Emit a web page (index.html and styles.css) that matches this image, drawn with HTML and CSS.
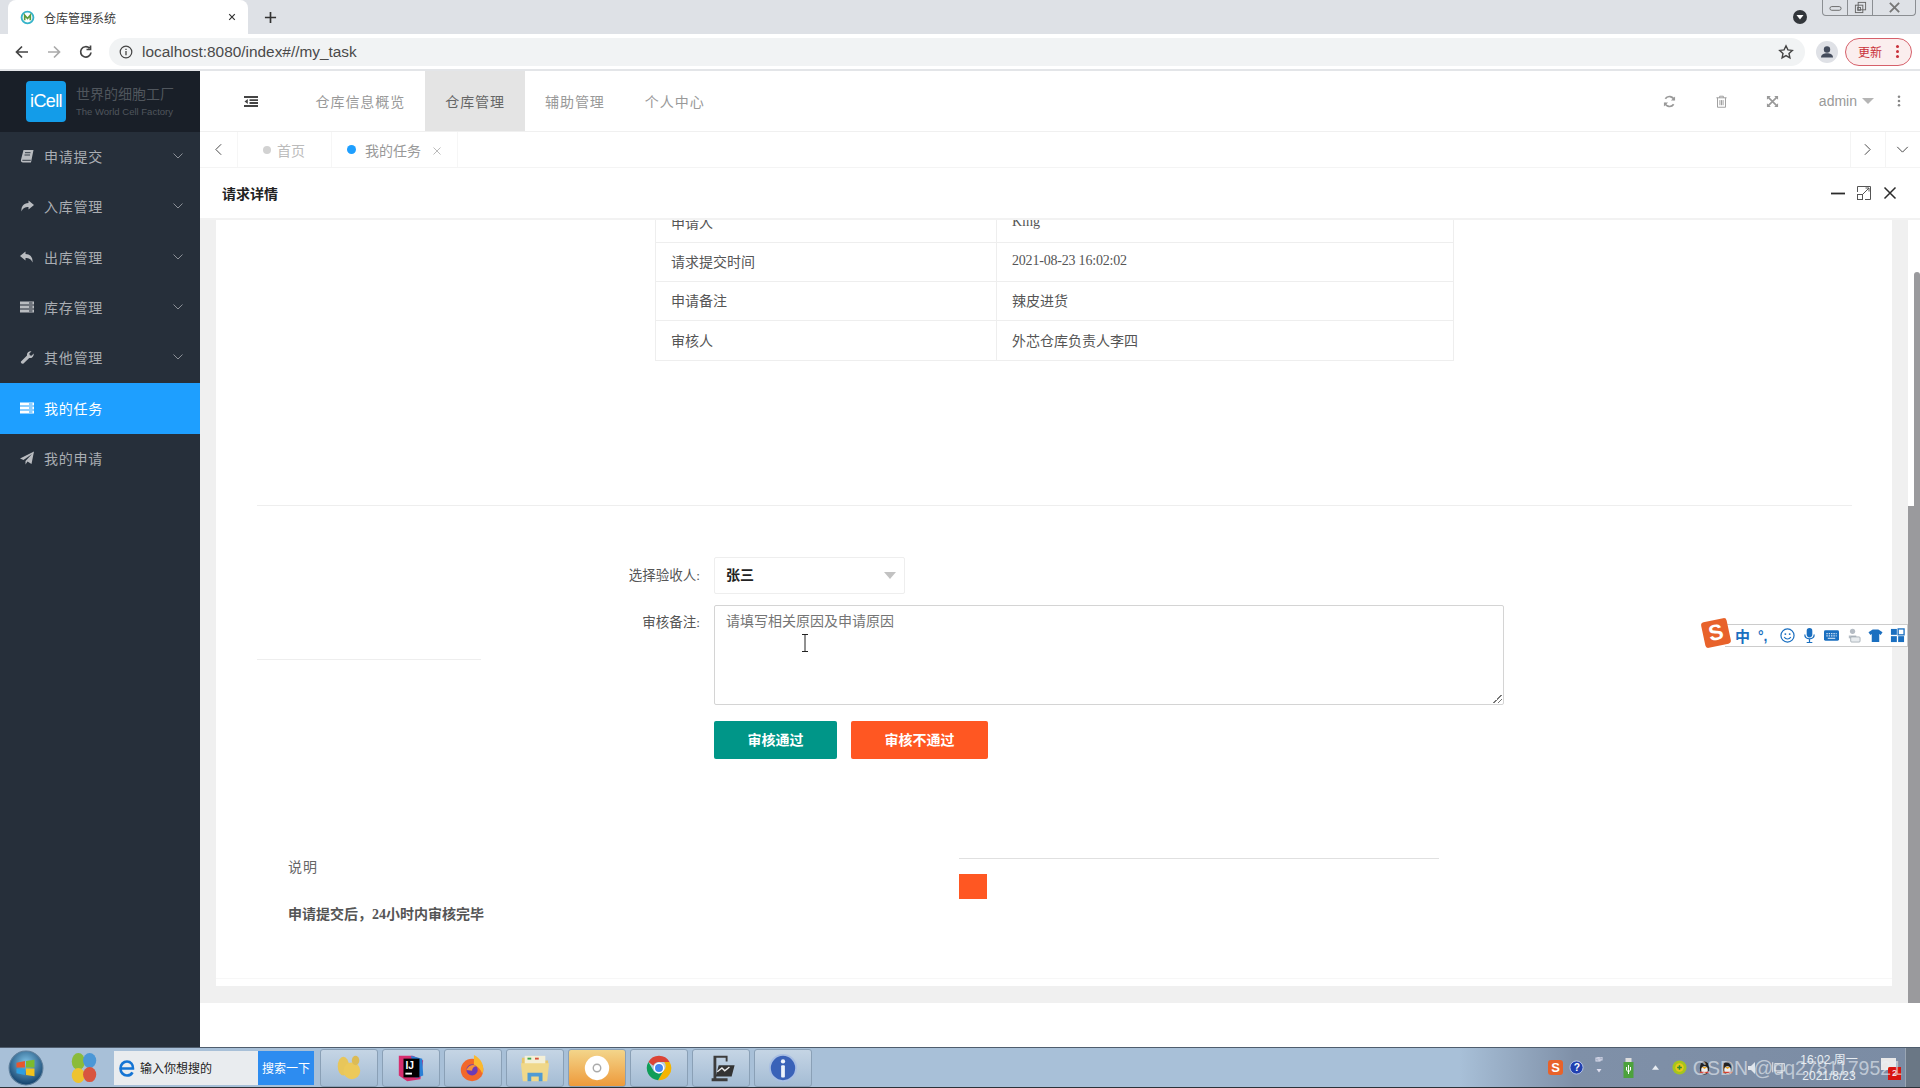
FILE: index.html
```html
<!DOCTYPE html>
<html lang="zh-CN">
<head>
<meta charset="utf-8">
<title>仓库管理系统</title>
<link rel="stylesheet" href="styles.css">
</head>
<body>
<div class="screen">
  <header class="browser">
    <div class="tabstrip">
      <div class="btab">
        <svg class="favicon" viewBox="0 0 16 16"><circle cx="8" cy="8" r="6.3" fill="none" stroke="#35b3c9" stroke-width="2"/><path d="M5 11V5.5L8 9l3-3.500V11" fill="none" stroke="#5b9a3c" stroke-width="1.800"/></svg>
        <span class="btab-title">仓库管理系统</span>
        <svg class="btab-x" viewBox="0 0 10 10"><path d="M1.500 1.500l7 7M8.500 1.500l-7 7" stroke="#333" stroke-width="1.500"/></svg>
      </div>
      <svg class="newtab" viewBox="0 0 14 14"><path d="M7 1v12M1 7h12" stroke="#333" stroke-width="1.800"/></svg>
      <div class="strip-right">
        <span class="profile-dot"><svg viewBox="0 0 14 14"><circle cx="7" cy="7" r="7" fill="#32363b"/><path d="M3.500 5h7L7 9.500z" fill="#fff"/></svg></span>
        <div class="winbtns">
          <span class="winbtn"><svg viewBox="0 0 14 10"><rect x="1" y="4" width="12" height="4" rx="2" fill="none" stroke="#666"/></svg></span>
          <span class="winbtn"><svg viewBox="0 0 14 14"><rect x="1.500" y="4.500" width="8" height="8" fill="none" stroke="#666"/><rect x="4.500" y="1.500" width="8" height="8" fill="none" stroke="#666"/><rect x="4" y="7" width="3" height="3" fill="none" stroke="#666"/></svg></span>
          <span class="winbtn wide"><svg viewBox="0 0 14 10"><path d="M2 0l10 10M12 0L2 10" stroke="#777" stroke-width="2"/></svg></span>
        </div>
      </div>
    </div>
    <div class="toolbar">
      <svg class="nav-ic" viewBox="0 0 16 16"><path d="M14 8H3M8 2.500L2.500 8 8 13.500" fill="none" stroke="#444" stroke-width="1.700"/></svg>
      <svg class="nav-ic" viewBox="0 0 16 16"><path d="M2 8h11M8 2.500L13.500 8 8 13.500" fill="none" stroke="#aaa" stroke-width="1.700"/></svg>
      <svg class="nav-ic" viewBox="0 0 16 16"><path d="M13 8.500A5.200 5.200 0 1 1 11.500 4.200M12.500 1.500V5.500H8.500" fill="none" stroke="#444" stroke-width="1.700"/></svg>
      <div class="address">
        <svg class="info-ic" viewBox="0 0 14 14"><circle cx="7" cy="7" r="5.800" fill="none" stroke="#444" stroke-width="1.200"/><path d="M7 6v4.200M7 3.700v1.300" stroke="#444" stroke-width="1.300"/></svg>
        <span class="url">localhost:8080/index#//my_task</span>
        <svg class="star-ic" viewBox="0 0 16 16"><path d="M8 1.800l1.900 4.100 4.400.5-3.300 3 .9 4.400L8 11.600l-3.900 2.200.9-4.400-3.300-3 4.400-.5z" fill="none" stroke="#444" stroke-width="1.400"/></svg>
      </div>
      <span class="avatar"><svg viewBox="0 0 22 22"><circle cx="11" cy="11" r="11" fill="#dfe1e6"/><circle cx="11" cy="8.500" r="3.200" fill="#444c5c"/><path d="M5 16.500c0-3 3-4.200 6-4.200s6 1.200 6 4.200z" fill="#444c5c"/></svg></span>
      <span class="update">更新<i class="update-dots"></i></span>
    </div>
  </header>

  <div class="app">
    <aside class="sidebar">
      <div class="logo">
        <span class="logo-mark">iCell</span>
        <div class="logo-text">
          <span class="logo-cn">世界的细胞工厂</span>
          <span class="logo-en">The World Cell Factory</span>
        </div>
      </div>
      <nav class="menu">
        <a class="menu-item">
          <svg class="menu-ic" viewBox="0 0 14 14"><path d="M3.500 1h10l-2.300 11.500-.3 1H3c-1.500 0-2.500-1.200-2-2.700z" fill="#b9bcc0"/><path d="M5 3.700h5.500M4.500 6h5.500M2.300 11.300h8.500" stroke="#262f3a" stroke-width=".9"/></svg>
          <span class="menu-label">申请提交</span>
          <svg class="chev" viewBox="0 0 10 6"><path d="M.5.500L5 5 9.500.500" fill="none" stroke="currentColor"/></svg>
        </a>
        <a class="menu-item">
          <svg class="menu-ic" viewBox="0 0 14 14"><path d="M8.500 1.500L14 6 8.500 10.500V8C5 8 3 9 1.500 12.500 1 7.500 3.500 4.200 8.500 4z" fill="#b9bcc0"/></svg>
          <span class="menu-label">入库管理</span>
          <svg class="chev" viewBox="0 0 10 6"><path d="M.5.500L5 5 9.500.500" fill="none" stroke="currentColor"/></svg>
        </a>
        <a class="menu-item">
          <svg class="menu-ic" viewBox="0 0 14 14"><path d="M5.500 1.500L0 6l5.500 4.500V8c3.500 0 5.500 1 7 4.500.5-5-2-8.300-7-8.500z" fill="#b9bcc0"/></svg>
          <span class="menu-label">出库管理</span>
          <svg class="chev" viewBox="0 0 10 6"><path d="M.5.500L5 5 9.500.500" fill="none" stroke="currentColor"/></svg>
        </a>
        <a class="menu-item">
          <svg class="menu-ic" viewBox="0 0 14 14"><path d="M0 1.500h14v3H0zM0 5.500h14v3H0zM0 9.500h14v3H0z" fill="#b9bcc0"/><path d="M9 3h3.500M9 7h3.500M9 11h3.500" stroke="#262f3a"/></svg>
          <span class="menu-label">库存管理</span>
          <svg class="chev" viewBox="0 0 10 6"><path d="M.5.500L5 5 9.500.500" fill="none" stroke="currentColor"/></svg>
        </a>
        <a class="menu-item">
          <svg class="menu-ic" viewBox="0 0 14 14"><path d="M1 11.500L7 5.500C6.500 3 8.500.800 11.500 1.200L9.300 3.500l.5 1.700 1.700.5 2.200-2.200c.4 3-2 5-4.500 4.500L3.500 13.500c-1.200 1-3.400-.8-2.500-2z" fill="#b9bcc0"/></svg>
          <span class="menu-label">其他管理</span>
          <svg class="chev" viewBox="0 0 10 6"><path d="M.5.500L5 5 9.500.500" fill="none" stroke="currentColor"/></svg>
        </a>
        <a class="menu-item active">
          <svg class="menu-ic" viewBox="0 0 14 14"><path d="M0 1.500h14v3H0zM0 5.500h14v3H0zM0 9.500h14v3H0z" fill="#fff"/><path d="M9 3h3.500M9 7h3.500M9 11h3.500" stroke="#1e9fff"/></svg>
          <span class="menu-label">我的任务</span>
        </a>
        <a class="menu-item">
          <svg class="menu-ic" viewBox="0 0 14 14"><path d="M14 .500L11.500 13 7.500 10.500 5.500 13.500V10L12 3 3.500 9 0 7.500z" fill="#b9bcc0"/></svg>
          <span class="menu-label">我的申请</span>
        </a>
      </nav>
    </aside>

    <main class="content">
      <div class="topnav">
        <svg class="fold-ic" viewBox="0 0 14 11"><path d="M0 1h14M5.500 4.200H14M5.500 7H14M0 10h14" stroke="#444" stroke-width="1.800"/><path d="M3.800 3L.5 5.500l3.300 2.500z" fill="#444"/></svg>
        <a class="topnav-item">仓库信息概览</a>
        <a class="topnav-item current">仓库管理</a>
        <a class="topnav-item">辅助管理</a>
        <a class="topnav-item">个人中心</a>
        <div class="topnav-right">
          <svg class="tool-ic" viewBox="0 0 14 14"><path d="M12 5.500A5.300 5.300 0 0 0 2.500 4M2 8.500A5.300 5.300 0 0 0 11.500 10" fill="none" stroke="#999" stroke-width="1.800"/><path d="M13 1.500V6H8.500zM1 12.500V8h4.500z" fill="#999"/></svg>
          <svg class="tool-ic" viewBox="0 0 14 14"><path d="M1.500 3h11M5 3V1.300h4V3M2.700 3v10.200h8.600V3M5.300 5.500v5.500M7 5.500v5.500M8.700 5.500v5.500" fill="none" stroke="#999"/></svg>
          <svg class="tool-ic last" viewBox="0 0 14 14"><path d="M1 1h4.200L1 5.200zM13 1H8.800L13 5.200zM1 13h4.200L1 8.800zM13 13H8.800L13 8.800z" fill="#999"/><path d="M2.500 2.500l9 9M11.500 2.500l-9 9" stroke="#999" stroke-width="1.800"/></svg>
          <span class="admin">admin<i class="caret"></i></span>
          <svg class="more-ic" viewBox="0 0 4 14"><circle cx="2" cy="2" r="1.500" fill="#888"/><circle cx="2" cy="7" r="1.500" fill="#888"/><circle cx="2" cy="12" r="1.500" fill="#888"/></svg>
        </div>
      </div>

      <div class="tabs">
        <span class="tab-arrow first"><svg viewBox="0 0 8 14"><path d="M7 1L1 7l6 6" fill="none" stroke="#444" stroke-width="1.100"/></svg></span>
        <span class="page-tab home"><i class="dot grey"></i>首页</span>
        <span class="page-tab task"><i class="dot blue"></i>我的任务<svg class="tab-close" viewBox="0 0 8 8"><path d="M.5.500l7 7M7.500.500l-7 7" stroke="#bbb"/></svg></span>
        <span class="tabs-fill"></span>
        <span class="tab-arrow bordered"><svg viewBox="0 0 8 14"><path d="M1 1l6 6-6 6" fill="none" stroke="#444" stroke-width="1.100"/></svg></span>
        <span class="tab-arrow bordered"><svg class="tab-down" viewBox="0 0 14 8"><path d="M1 1l6 6 6-6" fill="none" stroke="#444" stroke-width="1.100"/></svg></span>
      </div>

      <div class="dialog-title">
        <span class="dialog-name">请求详情</span>
        <div class="dialog-tools">
          <svg class="dlg-ic" viewBox="0 0 14 14"><path d="M0 7.500h14" stroke="#2b2b2b" stroke-width="1.800"/></svg>
          <svg class="dlg-ic" viewBox="0 0 14 14"><path d="M.5 6V.5h13v13H8" fill="none" stroke="#555"/><rect x=".5" y="8.500" width="5" height="5" fill="none" stroke="#555"/><path d="M6 8L12 2M8.500 2H12v3.500" fill="none" stroke="#555"/></svg>
          <svg class="dlg-ic" viewBox="0 0 14 14"><path d="M1.500 1.500l11 11M12.500 1.500l-11 11" stroke="#2b2b2b" stroke-width="1.500"/></svg>
        </div>
      </div>

      <div class="dialog-body">
        <div class="pane">
          <div class="card">
            <table class="info">
              <tr><td class="info-key">申请人</td><td>King</td></tr>
              <tr><td class="info-key">请求提交时间</td><td><span class="info-date">2021-08-23 16:02:02</span></td></tr>
              <tr><td class="info-key">申请备注</td><td>辣皮进货</td></tr>
              <tr><td class="info-key">审核人</td><td>外芯仓库负责人李四</td></tr>
            </table>
            <hr class="rule">
            <div class="form-row">
              <div class="side-rule"></div>
              <div class="form">
                <div class="field">
                  <label class="field-label">选择验收人:</label>
                  <div class="select"><span>张三</span><i class="select-caret"></i></div>
                </div>
                <div class="field field-area">
                  <label class="field-label">审核备注:</label>
                  <div class="area">请填写相关原因及申请原因<i class="grip"></i></div>
                </div>
                <div class="buttons">
                  <span class="btn pass">审核通过</span>
                  <span class="btn reject">审核不通过</span>
                </div>
              </div>
            </div>
            <div class="notes">
              <div class="note-left">
                <p class="note-title">说明</p>
                <p class="note-text">申请提交后，24小时内审核完毕</p>
              </div>
              <div class="note-right">
                <div class="note-line"></div>
                <div class="note-swatch"></div>
              </div>
            </div>
            <div class="foot-line"></div>
          </div>
        </div>
        <div class="scroll-track"><div class="thumb inner"></div></div>
        <div class="scroll-track"><div class="thumb outer"></div></div>
      </div>
    </main>
  </div>

  <footer class="taskbar">
    <svg class="start" viewBox="0 0 34 34"><defs><radialGradient id="orb" cx="50%" cy="35%" r="65%"><stop offset="0" stop-color="#7fc4e8"/><stop offset="1" stop-color="#123f6a"/></radialGradient></defs><circle cx="17" cy="17" r="16" fill="url(#orb)" stroke="#5e7f9c"/><path d="M8 12l8-1.500v6H8z" fill="#e8562e"/><path d="M17 10.300l8-1.200v7.400h-8z" fill="#7cba2e"/><path d="M8 17.500h8v6L8 22z" fill="#2f9fe0"/><path d="M17 17.500h8v7.400l-8-1.300z" fill="#f3c21c"/></svg>
    <svg class="tb-app-ic" viewBox="0 0 30 34"><ellipse cx="9" cy="10" rx="7" ry="9" fill="#8bbb3a"/><ellipse cx="21" cy="9" rx="7" ry="8" fill="#4b97d6"/><ellipse cx="9" cy="25" rx="7" ry="8" fill="#eec32f"/><ellipse cx="21" cy="24" rx="7" ry="8" fill="#d8553f"/></svg>
    <div class="searchbox">
      <svg class="ie-e" viewBox="0 0 18 20"><path d="M3 10.500h12c.3-4-2.400-7-6-7s-6.500 3-6.500 7 3 7 6.500 7c2.500 0 4.500-1.200 5.500-3.200" fill="none" stroke="#1474d4" stroke-width="2.600"/></svg>
      <span class="search-text">输入你想搜的</span>
      <span class="search-btn">搜索一下</span>
    </div>
    <span class="tb-btn"><svg viewBox="0 0 32 32"><ellipse cx="10" cy="14" rx="6" ry="10" fill="#e8c65a"/><ellipse cx="19" cy="19" rx="9" ry="9" fill="#ecc95a"/><ellipse cx="23" cy="8" rx="4" ry="5" fill="#dcbb55"/></svg></span>
    <span class="tb-btn"><svg viewBox="0 0 32 32"><path d="M3 3h15l11 5-3 20-14 2-9-6z" fill="#d62e6f"/><path d="M16 3l12 3 1 18-8 3z" fill="#2b7fd6"/><rect x="8" y="6" width="17" height="20" fill="#000"/><text x="10" y="17" class="ij">IJ</text><rect x="10" y="21" width="7" height="2" fill="#fff"/></svg></span>
    <span class="tb-btn"><svg viewBox="0 0 32 32"><circle cx="15" cy="18" r="12" fill="#f2682a"/><path d="M17 2c8 4 12 12 9 20-2-5-5-8-9-9z" fill="#fbb92f"/><circle cx="15" cy="18" r="6" fill="#6c3bb5"/><path d="M9 18c3-6 8-6 11-4-3 0-5 2-5 5z" fill="#f6903a"/></svg></span>
    <span class="tb-btn"><svg viewBox="0 0 32 32"><path d="M2 5h12l2 3h14v8H2z" fill="#e7c76d"/><rect x="5" y="3" width="22" height="10" fill="#f4f0d8"/><rect x="8" y="5" width="4" height="2" fill="#3da54a"/><rect x="16" y="5" width="4" height="2" fill="#d6503a"/><path d="M1 11h30l-2 19H3z" fill="#f0d88a"/><path d="M8 30v-9h16v9h-4v-5h-8v5z" fill="#4f9bd4"/></svg></span>
    <span class="tb-btn disc"><svg viewBox="0 0 32 32"><circle cx="16" cy="16" r="13" fill="#fff"/><circle cx="16" cy="16" r="4" fill="none" stroke="#aaa" stroke-width="1.500"/></svg></span>
    <span class="tb-btn"><svg viewBox="0 0 32 32"><path d="M16 3a13 13 0 0 1 11.300 6.500H16a6.500 6.500 0 0 0-6 4L4.700 9.500A13 13 0 0 1 16 3z" fill="#db4437"/><path d="M27.300 9.500A13 13 0 0 1 15 29l5.800-10a6.500 6.500 0 0 0 .7-9.500z" fill="#f4b400"/><path d="M4.700 9.500L10.500 19.500A6.500 6.500 0 0 0 20.800 19L15 29A13 13 0 0 1 4.700 9.500z" fill="#0f9d58"/><circle cx="16" cy="16" r="5" fill="#4285f4" stroke="#fff" stroke-width="1.500"/></svg></span>
    <span class="tb-btn"><svg viewBox="0 0 32 32"><path d="M8 3h15v6h-2V5H11v22h12v3H6V27h2z" fill="#3c3c3c"/><rect x="11" y="13" width="17" height="12" fill="#333" transform="skewX(-15) translate(6 0)"/><path d="M12 20l5-4 3 3 5-4" fill="none" stroke="#eee" stroke-width="1.500"/></svg></span>
    <span class="tb-btn"><svg viewBox="0 0 32 32"><circle cx="16" cy="16" r="14" fill="#3a62b8" stroke="#a9bfe3" stroke-width="2"/><circle cx="16" cy="9" r="2.300" fill="#eef3fb"/><rect x="14" y="13" width="4" height="13" rx="1" fill="#eef3fb"/></svg></span>
    <div class="tray">
      <span class="tray-s">S</span>
      <svg class="tray-help" viewBox="0 0 16 16"><circle cx="8" cy="8" r="7" fill="#2140b0" stroke="#b9c6e8"/><text x="5" y="12" class="q">?</text></svg>
      <svg class="tray-small" viewBox="0 0 8 18"><rect x="1" y="1" width="4" height="3" fill="none" stroke="#dde"/><rect x="3" y="0" width="4" height="3" fill="none" stroke="#dde"/><path d="M1.500 12h5L4 15.500z" fill="#dde"/></svg>
      <svg class="tray-usb" viewBox="0 0 10 20"><rect x="2" y="0" width="6" height="4" fill="#ddd"/><rect x="0" y="4" width="10" height="16" fill="#4ca23c"/><path d="M5 7v9M3 9v3l2 2 2-2V9" fill="none" stroke="#fff"/></svg>
      <svg class="tray-up" viewBox="0 0 8 5"><path d="M4 0l4 5H0z" fill="#e9edf2"/></svg>
      <svg class="tray-green" viewBox="0 0 16 16"><circle cx="8" cy="8" r="7.500" fill="#a6c51c"/><circle cx="8" cy="8" r="4.500" fill="#e9c81a"/><path d="M8 5.500v5M5.500 8h5" stroke="#2f8d2e" stroke-width="1.600"/></svg>
      <svg class="tray-qq" viewBox="0 0 16 16"><ellipse cx="8" cy="8" rx="5" ry="7" fill="#222"/><ellipse cx="8" cy="10" rx="3.500" ry="4" fill="#eee"/><path d="M5 7h6l-3 2z" fill="#e8a21e"/><path d="M3 12h10v1.500H3z" fill="#d6402e"/></svg>
      <svg class="tray-qq second" viewBox="0 0 16 16"><ellipse cx="8" cy="8" rx="5" ry="7" fill="#222"/><ellipse cx="8" cy="10" rx="3.500" ry="4" fill="#eee"/><path d="M5 7h6l-3 2z" fill="#e8a21e"/><path d="M3 12h10v1.500H3z" fill="#d6402e"/></svg>
      <svg class="tray-vol" viewBox="0 0 11 14"><path d="M1 5h3l4-4v12L4 9H1z" fill="#dfe5ec"/></svg>
      <svg class="tray-net" viewBox="0 0 18 18"><rect x="4" y="3" width="13" height="10" fill="none" stroke="#eee" stroke-width="1.300"/><path d="M1 1v14M7 15h8" stroke="#eee" stroke-width="1.300"/></svg>
      <div class="clock"><span>16:02 周一</span><span>2021/8/23</span></div>
      <span class="tray-badge"><span class="tray-paper"></span><span class="tray-red">2</span></span>
      <span class="show-desktop"></span>
    </div>
    <span class="watermark">CSDN @qq2781179521</span>
  </footer>

  <div class="ime">
    <span class="ime-logo">S</span>
    <div class="ime-bar">
      <span class="ime-cn">中</span>
      <span class="ime-punct">°,</span>
      <svg class="ime-ic" viewBox="0 0 16 16"><circle cx="8" cy="8" r="7" fill="none" stroke="#1a6fc0" stroke-width="1.300"/><circle cx="5.700" cy="6.500" r="1" fill="#1a6fc0"/><circle cx="10.300" cy="6.500" r="1" fill="#1a6fc0"/><path d="M4.500 9.500c1.500 3 5.500 3 7 0" fill="none" stroke="#1a6fc0" stroke-width="1.200"/></svg>
      <svg class="ime-ic" viewBox="0 0 16 16"><rect x="5" y="0" width="6" height="10" rx="3" fill="#1a6fc0"/><path d="M3 7c0 6 10 6 10 0M8 12v3M5 15.500h6" fill="none" stroke="#1a6fc0" stroke-width="1.300"/></svg>
      <svg class="ime-ic" viewBox="0 0 16 16"><rect x="0" y="2.500" width="16" height="11" rx="1.500" fill="#1a6fc0"/><path d="M2.500 6h11M2.500 8.500h11" stroke="#cfe3f6" stroke-width="1.300" stroke-dasharray="1.500 1"/><path d="M4 11h8" stroke="#cfe3f6" stroke-width="1.200"/></svg>
      <svg class="ime-ic" viewBox="0 0 16 16"><circle cx="7" cy="3.500" r="2.800" fill="#b5bcc4"/><path d="M3 8h8v3H3z" fill="#b5bcc4"/><rect x="5" y="9.500" width="10" height="5.500" rx="1" fill="#e8ecef" stroke="#9aa3ab" stroke-width=".8"/></svg>
      <svg class="ime-ic" viewBox="0 0 16 16"><path d="M5 1.500h6l4.500 3-2 3-1.500-1V15H4V6.500l-1.500 1-2-3z" fill="#1a6fc0"/></svg>
      <svg class="ime-ic" viewBox="0 0 16 16"><rect x="1" y="1" width="6.300" height="6.300" fill="#1a6fc0"/><rect x="8.700" y="1" width="6.300" height="6.300" fill="none" stroke="#1a6fc0" stroke-width="1.400"/><rect x="1" y="8.700" width="6.300" height="6.300" fill="#1a6fc0"/><rect x="8.700" y="8.700" width="6.300" height="6.300" fill="#1a6fc0"/></svg>
    </div>
  </div>

  <svg class="ibeam" viewBox="0 0 8 18"><path d="M1 .5h6M4 .5v17M1 17.500h6" fill="none" stroke="#222" stroke-width="1"/></svg>
</div>
</body>
</html>
```

FILE: styles.css
```css
* { box-sizing: border-box; }
html, body { margin: 0; height: 100%; }
body { font-family: "Liberation Sans", "Noto Sans CJK SC", sans-serif; background: #fff; overflow: hidden; }
p { margin: 0; }
a { text-decoration: none; }
i { display: inline-block; font-style: normal; }
svg { display: block; flex: none; }

.screen { width: 1920px; height: 1088px; display: flex; flex-direction: column; position: relative; overflow: hidden; }

/* browser chrome */
.browser { flex: none; height: 71px; display: flex; flex-direction: column; border-bottom: 2px solid #e3e5e8; }
.tabstrip { height: 34px; background: #dee1e6; display: flex; align-items: stretch; padding-left: 8px; }
.btab { width: 240px; background: #fff; border-radius: 8px 8px 0 0; display: flex; align-items: center; padding: 0 10px 0 12px; }
.favicon { width: 15px; height: 15px; margin-right: 9px; }
.btab-title { font-size: 12px; color: #3c3c3c; flex: 1; }
.btab-x { width: 8px; height: 8px; margin-right: 2px; }
.newtab { width: 13px; height: 13px; align-self: center; margin-left: 15.500px; }
.strip-right { margin-left: auto; display: flex; align-items: flex-start; }
.profile-dot { width: 14px; height: 14px; margin-top: 10px; margin-right: 15px; }
.winbtns { display: flex; height: 16px; border: 1px solid #8b8e92; border-top: 0; border-radius: 0 0 4px 4px; margin-right: 4px; }
.winbtn { width: 25px; display: flex; align-items: center; justify-content: center; border-right: 1px solid #8b8e92; }
.winbtn svg { width: 13px; height: 13px; }
.winbtn.wide { width: 42px; border-right: 0; }
.toolbar { height: 35px; background: #fff; display: flex; align-items: center; padding: 0 8px 0 14px; }
.nav-ic { width: 16px; height: 16px; margin-right: 16px; }
.nav-ic:nth-child(3) { margin-right: 15px; }
.address { flex: 1; height: 28px; background: #f1f3f4; border-radius: 14px; display: flex; align-items: center; padding: 0 10px; margin-right: 11px; }
.info-ic { width: 14px; height: 14px; margin-right: 9px; }
.url { font-size: 15.400px; color: #4a4a4a; flex: 1; }
.star-ic { width: 16px; height: 16px; margin-right: 1px; }
.avatar { width: 22px; height: 22px; margin-right: 7px; }
.update { width: 67px; height: 28px; border: 1px solid #d6606a; border-radius: 14px; background: #fbeeee; color: #c9303a; font-size: 12px; display: flex; align-items: center; padding-left: 12px; }
.update-dots { width: 3px; height: 3px; border-radius: 50%; background: #c9303a; margin-left: 14px; box-shadow: 0 -5px 0 #c9303a, 0 5px 0 #c9303a; }

/* app */
.app { flex: 1; min-height: 0; display: flex; }
.sidebar { width: 200px; flex: none; background: #262f3a; display: flex; flex-direction: column; }
.logo { height: 61px; background: #191f28; display: flex; align-items: center; padding-left: 26px; }
.logo-mark { width: 40px; height: 41px; background: #139ce9; border-radius: 4px; color: #fff; font-size: 18px; font-weight: 400; display: flex; align-items: center; justify-content: center; letter-spacing: -.6px; }
.logo-text { display: flex; flex-direction: column; margin-left: 10px; color: #50565d; }
.logo-cn { font-size: 14px; line-height: 18px; }
.logo-en { font-size: 9.500px; line-height: 12px; margin-top: 3px; white-space: nowrap; }
.menu { display: flex; flex-direction: column; }
.menu-item { height: 50.300px; display: flex; align-items: center; padding: 0 17.500px 2px 20px; color: #a9adb2; }
.menu-item.active { background: #1e9fff; color: #fff; }
.menu-ic { width: 14px; height: 14px; margin-right: 10px; }
.menu-label { font-size: 14px; letter-spacing: .75px; flex: 1; }
.chev { width: 10px; height: 6px; color: #8b9097; }

.content { flex: 1; min-width: 0; display: flex; flex-direction: column; }
.topnav { height: 61px; flex: none; display: flex; align-items: center; background: #fff; border-bottom: 1px solid #f0f0f0; padding-left: 44px; }
.fold-ic { width: 14px; height: 11px; margin-right: 37.500px; }
.topnav-item { height: 100%; padding: 0 20px; font-size: 14px; color: #999; display: flex; align-items: center; letter-spacing: .95px; }
.topnav-item.current { background: #e4e4e4; color: #666; }
.topnav-right { margin-left: auto; display: flex; align-items: center; padding-right: 19px; }
.tool-ic { width: 13px; height: 13px; margin-right: 38.500px; }
.tool-ic.last { margin-right: 39.500px; }
.admin { font-size: 14px; color: #999; display: flex; align-items: center; margin-right: 23px; }
.caret { width: 0; height: 0; border: 6px solid transparent; border-top: 6px solid #b5b5b5; border-bottom: 0; margin-left: 5px; }
.more-ic { width: 4px; height: 12px; }

.tabs { height: 36px; flex: none; display: flex; align-items: stretch; background: #fff; border-bottom: 1px solid #f4f4f4; }
.tab-arrow { width: 35px; display: flex; align-items: center; justify-content: center; }
.tab-arrow.first { width: 37px; }
.tab-arrow svg { width: 7px; height: 13px; }
.tab-arrow .tab-down { width: 13px; height: 7px; }
.tab-arrow.bordered { border-left: 1px solid #f4f4f4; padding-right: 2px; }
.page-tab { display: flex; align-items: center; font-size: 14px; color: #999; white-space: nowrap; border-left: 1px solid #f6f6f6; }
.page-tab.home { width: 94px; padding-left: 25px; color: #bbb; }
.page-tab.task { width: 127px; padding-left: 15px; border-right: 1px solid #f6f6f6; }
.dot { width: 8px; height: 8px; border-radius: 50%; margin-right: 6px; }
.dot.grey { background: #d2d2d2; }
.dot.blue { width: 9px; height: 9px; background: #1e9fff; margin-right: 9px; }
.tab-close { width: 8px; height: 8px; margin-left: 12px; margin-top: 2px; }
.tabs-fill { flex: 1; }

.dialog-title { height: 52px; flex: none; display: flex; align-items: center; justify-content: space-between; background: #fff; padding: 0 23px 0 22px; border-bottom: 2px solid #f2f2f2; }
.dialog-name { font-family: "Liberation Serif", "Noto Sans CJK SC", serif; font-size: 14px; font-weight: 700; color: #222; }
.dialog-tools { display: flex; gap: 12px; }
.dlg-ic { width: 14px; height: 14px; }

.dialog-body { flex: 1; min-height: 0; display: flex; align-items: flex-start; overflow: hidden; background: #fff; }
.pane { flex: 1; min-width: 0; height: 783px; padding: 0 16px 17px; background: #f0f0f0; }
.card { height: 766px; background: #fff; overflow: hidden; font-family: "Liberation Serif", "Noto Sans CJK SC", serif; }
.info { width: 799px; margin: -17.500px 0 0 439px; border-collapse: collapse; font-size: 14px; color: #555; }
.info td { height: 39.300px; padding: 0 15px 2px; border: 1px solid #eee; }
.info-key { width: 341px; }
.info-date { letter-spacing: -.2px; }
.rule { border: 0; border-top: 1px solid #eee; margin: 144px 40px 0 41px; }
.form-row { display: flex; margin: 51px 0 0 41px; }
.side-rule { width: 224px; height: 1px; margin-top: 102px; background: #eee; flex: none; }
.form { margin-left: 133px; display: flex; flex-direction: column; }
.field { display: flex; align-items: center; height: 37px; }
.field-area { height: 100px; align-items: flex-start; margin-top: 11px; }
.field-label { font-size: 13.500px; color: #555; width: 86px; text-align: right; white-space: nowrap; padding-bottom: 2px; }
.field-area .field-label { padding-top: 6px; }
.select { width: 191px; height: 37px; margin-left: 14px; border: 1px solid #eee; border-radius: 2px; display: flex; align-items: center; justify-content: space-between; padding: 0 8px 2px 11px; font-size: 14px; font-weight: 700; color: #222; }
.select-caret { width: 0; height: 0; border: 6px solid transparent; border-top: 7px solid #c2c2c2; border-bottom: 0; margin-top: 2px; }
.area { width: 790px; height: 100px; margin-left: 14px; border: 1px solid #d4d4d4; border-radius: 2px; padding: 4px 11px; font-size: 14px; color: #757575; position: relative; }
.grip { position: absolute; right: 1px; bottom: 1px; width: 9px; height: 9px; background: linear-gradient(135deg, transparent 50%, #777 50%, #777 58%, transparent 58%, transparent 75%, #777 75%, #777 83%, transparent 83%); }
.buttons { display: flex; margin: 16px 0 0 100px; gap: 14px; }
.btn { height: 38px; padding-bottom: 2px; display: flex; align-items: center; justify-content: center; color: #fff; font-size: 14px; font-weight: 700; border-radius: 2px; }
.btn.pass { width: 123px; background: #009688; }
.btn.reject { width: 137px; background: #ff5722; }
.notes { display: flex; margin-top: 99px; padding-left: 72px; }
.note-left { width: 671px; color: #666; }
.note-title { font-size: 14px; line-height: 20px; letter-spacing: 1px; }
.note-text { font-size: 14px; line-height: 20px; font-weight: 700; color: #555; margin-top: 27px; }
.note-right { width: 480px; }
.note-line { border-top: 1px solid #e0e0e0; }
.note-swatch { width: 28px; height: 25px; background: #ff5722; margin-top: 15px; }
.foot-line { margin-top: 53px; border-top: 1px solid #f7f7f7; }
.scroll-track { width: 6px; flex: none; }
.thumb { background: #9a9a9d; }
.thumb.inner { margin-top: 286px; height: 497px; }
.thumb.outer { margin-top: 52px; height: 731px; border-radius: 3px 3px 0 0; }

/* taskbar */
.taskbar { height: 41px; flex: none; display: flex; align-items: center; background: linear-gradient(90deg, #a8c0d8 0%, #a8c0d8 76%, #7f90a8 82%, #7b8ca4 100%); border-top: 1px solid #4f5d6d; border-bottom: 1px solid #2b3138; position: relative; padding-left: 8px; }
.start { width: 36px; height: 36px; }
.tb-app-ic { width: 30px; height: 32px; margin-left: 25px; }
.searchbox { width: 200px; height: 34px; margin: 0 2px 0 15px; background: #e9ecef; display: flex; align-items: center; }
.ie-e { width: 18px; height: 20px; margin-left: 4px; }
.search-text { font-size: 12px; color: #222; margin-left: 4px; flex: 1; white-space: nowrap; }
.search-btn { width: 56px; height: 34px; background: #2d8cf0; color: #fff; font-size: 12px; display: flex; align-items: center; justify-content: center; white-space: nowrap; }
.tb-btn { width: 58px; height: 38px; margin-left: 4px; display: flex; align-items: center; justify-content: center; background: linear-gradient(180deg, #c5d5e5, #a4bcd4); border: 1px solid #8aa0b6; border-radius: 3px; }
.tb-btn svg { width: 30px; height: 30px; }
.tb-btn.disc { background: linear-gradient(180deg, #f3d58a, #ee9a3b); }
.tray { margin-left: auto; display: flex; align-items: center; height: 100%; }
.tray-s { width: 15px; height: 15px; background: #e8622a; color: #fff; font-size: 13px; font-weight: 700; display: flex; align-items: center; justify-content: center; border-radius: 3px; margin-right: 6px; }
.tray-help { width: 15px; height: 15px; margin-right: 11px; }
.q { font-family: "Liberation Sans", sans-serif; font-size: 11px; font-weight: 700; fill: #fff; }
.ij { font-family: "Liberation Sans", sans-serif; font-size: 11px; font-weight: 700; fill: #fff; }
.tray-small { width: 8px; height: 18px; margin: 0 20px 3px 0; }
.tray-usb { width: 11px; height: 20px; margin-right: 18px; }
.tray-up { width: 7px; height: 5px; margin-right: 13px; }
.tray-green { width: 15px; height: 15px; margin-right: 10px; }
.tray-qq { width: 15px; height: 16px; margin-right: 8px; }
.tray-qq.second { margin-right: 12px; }
.tray-vol { width: 11px; height: 14px; margin-right: 14px; }
.tray-net { width: 13px; height: 14px; margin-right: 4px; }
.clock { width: 80px; display: flex; flex-direction: column; align-items: center; color: #e8edf2; font-size: 12px; line-height: 16px; margin-right: 12px; white-space: nowrap; }
.tray-badge { width: 20px; height: 20px; position: relative; margin-right: 4px; }
.tray-paper { position: absolute; left: 0; top: 0; width: 15px; height: 12px; background: #e9e9e9; }
.tray-red { position: absolute; right: 0; bottom: -2px; width: 13px; height: 13px; background: #d8150f; color: #fff; font-size: 9px; text-align: center; line-height: 13px; }
.show-desktop { width: 15px; height: 100%; background: #6a7785; border-left: 1px solid #9aa6b4; }
.watermark { position: absolute; right: 18px; top: 9px; font-size: 19.500px; color: rgba(235, 240, 245, .62); white-space: nowrap; }

/* floating IME toolbar and mouse pointer */
.ime { position: absolute; left: 1703px; top: 619px; display: flex; align-items: center; }
.ime-logo { width: 26px; height: 26px; background: #e8622a; color: #fff; font-size: 22px; font-weight: 700; display: flex; align-items: center; justify-content: center; border-radius: 3px; transform: rotate(-12deg); position: relative; z-index: 1; font-family: "Liberation Sans", sans-serif; }
.ime-bar { height: 23px; width: 183px; margin-left: -4px; margin-top: 5px; padding-left: 10px; background: #fff; border: 1px solid #ccc; border-left: 0; display: flex; align-items: center; gap: 7px; }
.ime-cn { width: 16px; color: #1a6fc0; font-size: 15px; font-weight: 700; }
.ime-punct { width: 15px; color: #1a6fc0; font-size: 14px; font-weight: 700; }
.ime-ic { width: 15px; height: 15px; }
.ibeam { position: absolute; left: 801px; top: 634px; width: 8px; height: 18px; }
```
